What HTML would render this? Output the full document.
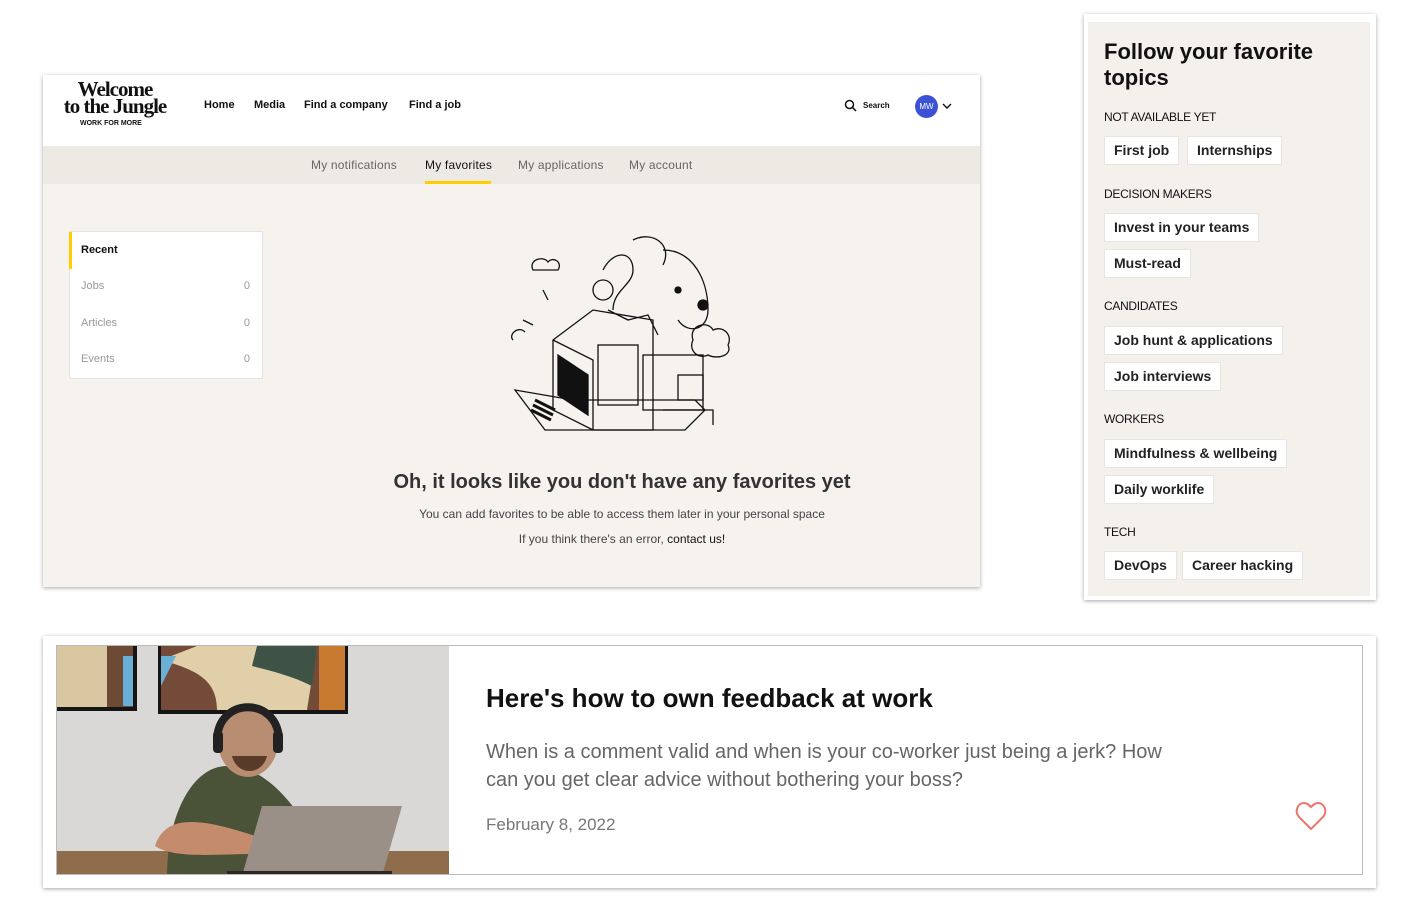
<!DOCTYPE html>
<html><head><meta charset="utf-8"><style>
*{margin:0;padding:0;box-sizing:border-box}
body{width:1422px;height:920px;background:#fff;font-family:"Liberation Sans",sans-serif;position:relative;overflow:hidden;color:#111}
.abs{position:absolute}
.card1{left:43px;top:75px;width:937px;height:512px;background:#f6f3ef;box-shadow:0 1px 4px rgba(0,0,0,.35)}
.hdr{left:0;top:0;width:937px;height:71px;background:#fff}
.sub{left:0;top:71px;width:937px;height:38px;background:#ede9e3;font-size:12px;color:#666;letter-spacing:.2px}
.sub span{position:absolute;top:12px}
.nav{font-size:11px;font-weight:bold;top:24px}
.side{left:26px;top:156px;width:194px;height:148px;background:#fff;border:1px solid #e6e2dc;font-size:11px;color:#999}
.side div{position:absolute;left:11px}
.side b{position:absolute;right:12px;font-weight:normal}
.card2{left:1084px;top:14px;width:292px;height:586px;background:#fff;box-shadow:0 1px 4px rgba(0,0,0,.35)}
.in2{left:4px;top:8px;width:282px;height:574px;background:#f4f1ed}
.cat{position:absolute;left:16px;font-size:12px;letter-spacing:-.3px;color:#111}
.tag{position:absolute;height:29px;background:#fff;border:1px solid #e8e4de;font-size:14px;font-weight:bold;color:#222;padding:0 9px;line-height:27px;white-space:nowrap}
.card3{left:43px;top:636px;width:1333px;height:252px;background:#fff;box-shadow:0 1px 4px rgba(0,0,0,.35)}
.in3{left:13px;top:9px;width:1307px;height:230px;border:1px solid #bbb;background:#fff;overflow:hidden}
</style></head><body>
<div class="abs card1">
 <div class="abs hdr">
  <div class="abs" style="left:14px;top:6px;font-family:'Liberation Serif',serif;font-weight:bold;font-size:21px;line-height:17px;letter-spacing:-1px;text-align:center;width:116px">Welcome<br>to the Jungle</div>
  <div class="abs" style="left:37px;top:45px;font-size:7px;font-weight:bold">WORK FOR MORE</div>
  <div class="abs nav" style="left:161px">Home</div>
  <div class="abs nav" style="left:211px">Media</div>
  <div class="abs nav" style="left:261px">Find a company</div>
  <div class="abs nav" style="left:366px">Find a job</div>
  <svg class="abs" style="left:801px;top:24px" width="13" height="13" viewBox="0 0 13 13"><circle cx="5.5" cy="5.5" r="4" fill="none" stroke="#111" stroke-width="1.5"/><path d="M8.5 8.5L12 12" stroke="#111" stroke-width="1.5"/></svg>
  <div class="abs" style="left:820px;top:26px;font-size:8px;font-weight:bold">Search</div>
  <div class="abs" style="left:872px;top:20px;width:23px;height:23px;border-radius:50%;background:#3b52d6;color:#fff;font-size:8px;line-height:23px;text-align:center">MW</div>
  <svg class="abs" style="left:899px;top:27px" width="10" height="8"><path d="M1 2l4 4 4-4" fill="none" stroke="#111" stroke-width="1.4"/></svg>
 </div>
 <div class="abs sub">
  <span style="left:268px">My notifications</span>
  <span style="left:382px;color:#111">My favorites</span>
  <div class="abs" style="left:382px;top:35px;width:66px;height:3px;background:#ffcd00"></div>
  <span style="left:475px">My applications</span>
  <span style="left:586px">My account</span>
 </div>
 <div class="abs side">
  <div style="left:-1px;top:0;width:3px;height:37px;background:#ffcd00"></div>
  <div style="top:12px;color:#111;font-weight:bold">Recent</div>
  <div style="top:48px">Jobs</div><b style="top:48px">0</b>
  <div style="top:85px">Articles</div><b style="top:85px">0</b>
  <div style="top:121px">Events</div><b style="top:121px">0</b>
 </div>
 <svg class="abs" style="left:460px;top:155px" width="240" height="220" viewBox="0 0 240 220" fill="none" stroke="#111" stroke-width="1.3">
  <path d="M30 40c-5-10 10-15 15-8 5-6 15 0 10 8z"/>
  <path d="M12 160l30 40h140l20-20-10-10H70z"/>
  <path d="M50 110l40-30 60 10v110H90L50 180z"/>
  <rect x="95" y="115" width="40" height="60"/>
  <rect x="140" y="125" width="60" height="55"/>
  <rect x="175" y="145" width="25" height="25"/>
  <path d="M50 110l40 20v70" />
  <path d="M55 125l30 20v40l-30-20z" fill="#111"/>
  <path d="M32 170l20 10M30 175l20 10M28 180l20 10" stroke-width="3"/>
  <path d="M100 40c10-20 30-20 30 0 0 15-20 20-20 40"/>
  <path d="M130 10c20-10 40 5 30 25M160 20c30 0 45 30 45 60 0 20-20 25-30 10"/>
  <circle cx="100" cy="60" r="10"/><circle cx="175" cy="60" r="3" fill="#111"/><circle cx="200" cy="75" r="5" fill="#111"/>
  <path d="M190 110c-5-15 15-20 20-10 10-5 20 5 15 15 5 10-10 15-20 10-10 5-20-5-15-15z"/>
  <path d="M10 110c-5-5 5-15 12-8M20 90l10 5M40 60l5 10"/>
  <path d="M105 80l20 10 20-5 10 20"/><path d="M160 180h50v15"/>
 </svg>
 <div class="abs" style="left:220px;width:718px;top:396px;text-align:center;font-size:20px;font-weight:bold;color:#333">Oh, it looks like you don't have any favorites yet</div>
 <div class="abs" style="left:220px;width:718px;top:432px;text-align:center;font-size:12px;color:#444">You can add favorites to be able to access them later in your personal space</div>
 <div class="abs" style="left:220px;width:718px;top:457px;text-align:center;font-size:12px;color:#444">If you think there's an error, <b style="color:#111;font-weight:normal">contact us!</b></div>
</div>

<div class="abs card2"><div class="abs in2">
 <div class="abs" style="left:16px;top:17px;font-size:22px;font-weight:bold;line-height:26px;width:250px">Follow your favorite topics</div>
 <div class="cat" style="top:88px">NOT AVAILABLE YET</div>
 <div class="tag" style="left:16px;top:114px">First job</div>
 <div class="tag" style="left:99px;top:114px">Internships</div>
 <div class="cat" style="top:165px">DECISION MAKERS</div>
 <div class="tag" style="left:16px;top:191px">Invest in your teams</div>
 <div class="tag" style="left:16px;top:227px">Must-read</div>
 <div class="cat" style="top:277px">CANDIDATES</div>
 <div class="tag" style="left:16px;top:304px">Job hunt &amp; applications</div>
 <div class="tag" style="left:16px;top:340px">Job interviews</div>
 <div class="cat" style="top:390px">WORKERS</div>
 <div class="tag" style="left:16px;top:417px">Mindfulness &amp; wellbeing</div>
 <div class="tag" style="left:16px;top:453px">Daily worklife</div>
 <div class="cat" style="top:503px">TECH</div>
 <div class="tag" style="left:16px;top:529px">DevOps</div>
 <div class="tag" style="left:94px;top:529px">Career hacking</div>
</div></div>

<div class="abs card3"><div class="abs in3">
 <svg class="abs" style="left:0;top:0" width="392" height="230" viewBox="0 0 392 230">
  <rect width="392" height="230" fill="#d9d8d6"/>
  <rect x="0" y="0" width="80" height="65" fill="#151515"/><rect x="0" y="0" width="76" height="61" fill="#6e4a35"/><rect x="0" y="0" width="50" height="61" fill="#d8c7a0"/><rect x="66" y="10" width="10" height="50" fill="#6ab0d6"/>
  <rect x="101" y="0" width="190" height="68" fill="#151515"/><rect x="104" y="0" width="184" height="64" fill="#744a38"/><path d="M140 0h120l-10 64H160c0-30-20-40-56-50z" fill="#e0cfa8"/><path d="M200 0h60l-5 40c-20-10-40-15-60-20z" fill="#3e5246"/><rect x="262" y="0" width="26" height="64" fill="#c87a30"/><path d="M104 10l15 0-15 30z" fill="#6ab0d6"/>
  <rect x="0" y="205" width="392" height="25" fill="#8f6c4c"/>
  <path d="M110 230c0-60 25-110 60-110s60 30 80 60l0 50z" fill="#4a5238"/>
  <ellipse cx="191" cy="95" rx="30" ry="36" fill="#b88c70"/>
  <path d="M160 95c0-45 62-45 62 0" fill="none" stroke="#222" stroke-width="8"/>
  <rect x="156" y="85" width="10" height="22" rx="4" fill="#222"/><rect x="216" y="85" width="10" height="22" rx="4" fill="#222"/>
  <path d="M175 110c5 20 30 20 35 0" fill="#5a3a28"/>
  <path d="M98 200c10-30 40-30 100-10v18c-40 0-80 5-100-8z" fill="#c48c6c"/>
  <path d="M205 160h140l-20 70H185z" fill="#9a9088"/><path d="M170 225h165v5H170z" fill="#2b2622"/>
 </svg>
 <div class="abs" style="left:429px;top:37px;font-size:26px;font-weight:bold;color:#111">Here's how to own feedback at work</div>
 <div class="abs" style="left:429px;top:92px;font-size:20px;line-height:28px;color:#666;width:700px">When is a comment valid and when is your co-worker just being a jerk? How can you get clear advice without bothering your boss?</div>
 <div class="abs" style="left:429px;top:169px;font-size:17px;color:#777">February 8, 2022</div>
 <svg class="abs" style="left:1238px;top:155px" width="32" height="30" viewBox="0 0 32 30"><path d="M16 28L4 16C-1 10 3 2 9 2c3 0 5 2 7 4 2-2 4-4 7-4 6 0 10 8 5 14z" fill="none" stroke="#e8766a" stroke-width="2"/></svg>
</div></div>
</body></html>
